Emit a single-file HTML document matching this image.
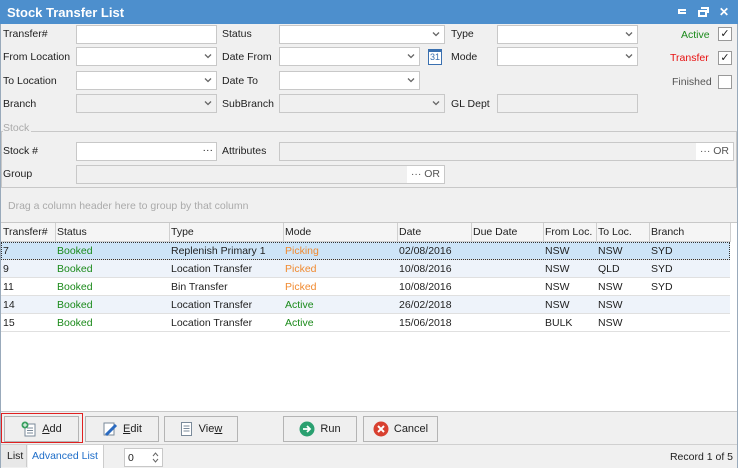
<!DOCTYPE html>
<html><head><meta charset="utf-8"><style>
*{box-sizing:border-box;margin:0;padding:0}
body{width:738px;height:468px;background:#f0f0f0;font-family:"Liberation Sans",sans-serif;font-size:10.5px;color:#1e1e1e;position:relative;overflow:hidden}
.a{position:absolute;white-space:nowrap}
.t{position:absolute;background:#fff;border:1px solid #c8c8c8;height:19px}
.d{background:#f0f0f0}
.cv{position:absolute;right:4px;top:5px;width:8px;height:6px}
.lbl{position:absolute;line-height:14px}
.cb{position:absolute;width:14px;height:14px;border:1px solid #999;background:#fff}
.btn{position:absolute;top:416px;height:26px;border:1px solid #b4b4b4;background:#efefef;display:flex;align-items:center;justify-content:center;gap:5px;font-size:11px}
.row{position:absolute;left:1px;width:729px;height:18px;border-bottom:1px solid #e0e0e0}
.row span,.hd span{position:absolute;top:3px}
</style></head><body>
<svg width="0" height="0" style="position:absolute"><defs><symbol id="chev" viewBox="0 0 8 6"><path d="M1 1.5L4 4.5L7 1.5" fill="none" stroke="#666" stroke-width="1.3"/></symbol></defs></svg>
<div class="a" style="left:0;top:0;width:738px;height:24px;background:#4d8fcd"></div>
<div class="a" style="left:7px;top:5px;color:#fff;font-weight:bold;font-size:13px">Stock Transfer List</div>
<div class="a" style="left:678px;top:9px;width:8px;height:5px;border:2px solid #fff;border-right:none"></div>
<div class="a" style="left:698px;top:10px;width:9px;height:7px;border:2px solid #fff"></div>
<div class="a" style="left:701px;top:7px;width:8px;height:6px;border-top:2px solid #fff;border-right:2px solid #fff"></div>
<div class="a" style="left:719px;top:5px;color:#fff;font-weight:bold;font-size:12px">✕</div>
<div class="a" style="left:0;top:24px;width:1px;height:444px;background:#9ab"></div>
<div class="a" style="left:737px;top:24px;width:1px;height:444px;background:#9ab"></div>

<div class="lbl" style="left:3px;top:27px">Transfer#</div>
<div class="lbl" style="left:3px;top:50px">From Location</div>
<div class="lbl" style="left:3px;top:74px">To Location</div>
<div class="lbl" style="left:3px;top:97px">Branch</div>
<div class="t" style="left:76px;top:25px;width:141px"></div>
<div class="t" style="left:76px;top:47px;width:141px"><svg class="cv"><use href="#chev"/></svg></div>
<div class="t" style="left:76px;top:71px;width:141px"><svg class="cv"><use href="#chev"/></svg></div>
<div class="t d" style="left:76px;top:94px;width:141px"><svg class="cv"><use href="#chev"/></svg></div>
<div class="lbl" style="left:222px;top:27px">Status</div>
<div class="lbl" style="left:222px;top:50px">Date From</div>
<div class="lbl" style="left:222px;top:74px">Date To</div>
<div class="lbl" style="left:222px;top:97px">SubBranch</div>
<div class="t" style="left:279px;top:25px;width:166px"><svg class="cv"><use href="#chev"/></svg></div>
<div class="t" style="left:279px;top:47px;width:141px"><svg class="cv"><use href="#chev"/></svg></div>
<div class="t" style="left:279px;top:71px;width:141px"><svg class="cv"><use href="#chev"/></svg></div>
<div class="t d" style="left:279px;top:94px;width:166px"><svg class="cv"><use href="#chev"/></svg></div>
<div class="a" style="left:428px;top:49px;width:14px;height:16px;border:1px solid #3a70b0;border-top:3px solid #3a70b0;background:#fff;color:#3a70b0;font-size:9px;text-align:center;line-height:11px">31</div>
<div class="lbl" style="left:451px;top:27px">Type</div>
<div class="lbl" style="left:451px;top:50px">Mode</div>
<div class="lbl" style="left:451px;top:97px">GL Dept</div>
<div class="t" style="left:497px;top:25px;width:141px"><svg class="cv"><use href="#chev"/></svg></div>
<div class="t" style="left:497px;top:47px;width:141px"><svg class="cv"><use href="#chev"/></svg></div>
<div class="t d" style="left:497px;top:94px;width:141px"></div>
<div class="lbl" style="left:681px;top:28px;color:#1a8a1a">Active</div>
<div class="lbl" style="left:670px;top:51px;color:#e81010">Transfer</div>
<div class="lbl" style="left:672px;top:75px;color:#555">Finished</div>
<div class="cb" style="left:718px;top:27px;line-height:12px;text-align:center;font-size:11px">✓</div>
<div class="cb" style="left:718px;top:51px;line-height:12px;text-align:center;font-size:11px">✓</div>
<div class="cb" style="left:718px;top:75px"></div>

<div class="a" style="left:1px;top:131px;width:736px;height:57px;border:1px solid #c8c8c8;border-bottom:none"></div>
<div class="lbl" style="left:3px;top:121px;color:#aaa;background:#f0f0f0;padding-right:2px">Stock</div>
<div class="lbl" style="left:3px;top:144px">Stock #</div>
<div class="lbl" style="left:3px;top:167px">Group</div>
<div class="t" style="left:76px;top:142px;width:141px"><span class="a" style="right:3px;top:1px">···</span></div>
<div class="lbl" style="left:222px;top:144px">Attributes</div>
<div class="t d" style="left:279px;top:142px;width:455px"><span class="a" style="right:0;top:0;height:17px;background:#fff;padding:2px 4px;color:#555">··· OR</span></div>
<div class="t d" style="left:76px;top:165px;width:369px"><span class="a" style="right:0;top:0;height:17px;background:#fff;padding:2px 4px;color:#555">··· OR</span></div>
<div class="a" style="left:1px;top:187px;width:736px;height:1px;background:#c8c8c8"></div>
<div class="lbl" style="left:8px;top:199px;color:#aaa">Drag a column header here to group by that column</div>

<div class="a" style="left:1px;top:222px;width:736px;height:190px;background:#fff;border-top:1px solid #c8c8c8;border-bottom:1px solid #c8c8c8"></div>
<div class="a hd" style="left:1px;top:223px;width:729px;height:19px;background:#f5f5f5;border-bottom:1px solid #d0d0d0">
<span style="left:2px">Transfer#</span><span style="left:56px">Status</span><span style="left:170px">Type</span><span style="left:284px">Mode</span><span style="left:398px">Date</span><span style="left:472px">Due Date</span><span style="left:544px">From Loc.</span><span style="left:597px">To Loc.</span><span style="left:650px">Branch</span>
</div>
<div class="a" style="left:55px;top:223px;width:1px;height:19px;background:#d0d0d0;box-shadow:114px 0 #d0d0d0,228px 0 #d0d0d0,342px 0 #d0d0d0,416px 0 #d0d0d0,488px 0 #d0d0d0,541px 0 #d0d0d0,594px 0 #d0d0d0,675px 0 #d0d0d0"></div>
<div class="row" style="top:242px;background:#cde4f7;outline:1px dotted #333;outline-offset:-1px"><span style="left:2px">7</span><span style="left:56px;color:#1a8a1a">Booked</span><span style="left:170px">Replenish Primary 1</span><span style="left:284px;color:#f08a30">Picking</span><span style="left:398px">02/08/2016</span><span style="left:544px">NSW</span><span style="left:597px">NSW</span><span style="left:650px">SYD</span></div>
<div class="row" style="top:260px;background:#eef3fa"><span style="left:2px">9</span><span style="left:56px;color:#1a8a1a">Booked</span><span style="left:170px">Location Transfer</span><span style="left:284px;color:#f08a30">Picked</span><span style="left:398px">10/08/2016</span><span style="left:544px">NSW</span><span style="left:597px">QLD</span><span style="left:650px">SYD</span></div>
<div class="row" style="top:278px"><span style="left:2px">11</span><span style="left:56px;color:#1a8a1a">Booked</span><span style="left:170px">Bin Transfer</span><span style="left:284px;color:#f08a30">Picked</span><span style="left:398px">10/08/2016</span><span style="left:544px">NSW</span><span style="left:597px">NSW</span><span style="left:650px">SYD</span></div>
<div class="row" style="top:296px;background:#eef3fa"><span style="left:2px">14</span><span style="left:56px;color:#1a8a1a">Booked</span><span style="left:170px">Location Transfer</span><span style="left:284px;color:#1a8a1a">Active</span><span style="left:398px">26/02/2018</span><span style="left:544px">NSW</span><span style="left:597px">NSW</span></div>
<div class="row" style="top:314px"><span style="left:2px">15</span><span style="left:56px;color:#1a8a1a">Booked</span><span style="left:170px">Location Transfer</span><span style="left:284px;color:#1a8a1a">Active</span><span style="left:398px">15/06/2018</span><span style="left:544px">BULK</span><span style="left:597px">NSW</span></div>

<div class="a" style="left:1px;top:413px;width:82px;height:30px;border:1px solid #e02020"></div>
<div class="btn" style="left:4px;width:75px"><svg width="16" height="16"><rect x="4" y="3" width="10" height="12" fill="#fff" stroke="#7a8a9a"/><path d="M6 7h6M6 9.5h6M6 12h6" stroke="#7a8a9a"/><circle cx="4" cy="4" r="3.5" fill="#3aa060"/><path d="M4 2v4M2 4h4" stroke="#fff"/></svg><span><u>A</u>dd</span></div>
<div class="btn" style="left:85px;width:74px"><svg width="16" height="16"><rect x="2" y="2" width="10" height="12" fill="#fff" stroke="#7a8a9a"/><path d="M4 14L14 4" stroke="#2a6ac0" stroke-width="3"/></svg><span><u>E</u>dit</span></div>
<div class="btn" style="left:164px;width:74px"><svg width="14" height="16"><rect x="1.5" y="1.5" width="10" height="13" fill="#fff" stroke="#7a8a9a"/><path d="M3.5 5h6M3.5 7.5h6M3.5 10h6" stroke="#7a8a9a"/></svg><span>Vie<u>w</u></span></div>
<div class="btn" style="left:283px;width:74px"><svg width="16" height="16"><circle cx="8" cy="8" r="7.5" fill="#2aa070"/><path d="M4 8h7M8 5l3 3-3 3" stroke="#fff" stroke-width="1.8" fill="none"/></svg><span>Run</span></div>
<div class="btn" style="left:363px;width:75px"><svg width="16" height="16"><circle cx="8" cy="8" r="7.5" fill="#d84030"/><path d="M5 5l6 6M11 5l-6 6" stroke="#fff" stroke-width="2"/></svg><span>Cancel</span></div>

<div class="a" style="left:1px;top:444px;width:736px;height:1px;background:#d0d0d0"></div>
<div class="a" style="left:1px;top:445px;width:26px;height:22px;background:#e8e8e8;border-right:1px solid #ccc;padding:5px 0 0 6px">List</div>
<div class="a" style="left:28px;top:445px;width:76px;height:23px;background:#fff;border-right:1px solid #ccc;padding:5px 0 0 4px;color:#1c6cc8">Advanced List</div>
<div class="a" style="left:124px;top:448px;width:39px;height:19px;background:#fff;border:1px solid #c8c8c8;padding:3px 0 0 3px">0<svg class="a" style="right:3px;top:2px" width="7" height="13"><path d="M1 5L3.5 2L6 5M1 8L3.5 11L6 8" fill="none" stroke="#666"/></svg></div>
<div class="a" style="right:5px;top:451px">Record 1 of 5</div>
</body></html>
